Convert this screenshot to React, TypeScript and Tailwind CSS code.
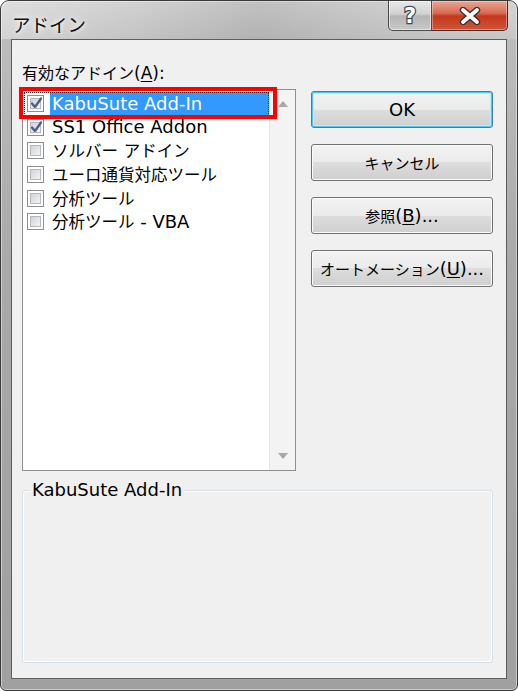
import React from "react";

const CJK = /([\u3000-\u30ff\u3400-\u9fff\uff00-\uffef]+)/;

function Mixed({ text, cjk }: { text: string; cjk: string }) {
  const parts = text.split(CJK);
  return (
    <>
      {parts.map((p, i) =>
        p === "" ? null : CJK.test(p) ? (
          <span key={i} className={cjk}>
            {p}
          </span>
        ) : (
          <span key={i}>{p}</span>
        )
      )}
    </>
  );
}

function Check({ checked }: { checked: boolean }) {
  return (
    <div className="w-[17px] h-[17px] shrink-0 border border-[#8e8f8f] bg-white p-[2px] flex">
      <div className="flex-1 border border-[#b4b8bd] bg-[linear-gradient(135deg,#cfd3d8,#f4f4f4)] relative">
        {checked && (
          <svg className="absolute -left-[2px] -top-[3px]" width="15" height="15" viewBox="0 0 15 15">
            <path d="M3 7.5 L6 11 L12 2.5" fill="none" stroke="#4a5c8c" strokeWidth="2.3" strokeLinecap="round" strokeLinejoin="round" />
          </svg>
        )}
      </div>
    </div>
  );
}

const items = [
  { label: "KabuSute Add-In", checked: true, selected: true },
  { label: "SS1 Office Addon", checked: true },
  { label: "ソルバー アドイン", checked: false },
  { label: "ユーロ通貨対応ツール", checked: false },
  { label: "分析ツール", checked: false },
  { label: "分析ツール - VBA", checked: false },
];

function Btn({ children, def }: { children: React.ReactNode; def?: boolean }) {
  return (
    <div
      className={
        def
          ? "h-[37px] rounded-[3px] border border-[#3c7fb1] shadow-[inset_0_0_0_1px_#4fc7f5,inset_0_0_0_2px_#bfeafa] bg-[linear-gradient(180deg,#f2f2f2_0%,#ebebeb_50%,#dddddd_50%,#cfcfcf_100%)] flex items-center justify-center text-[18px] leading-[22px] text-black"
          : "h-[37px] rounded-[3px] border border-[#707070] shadow-[inset_0_0_0_1px_#fbfbfb] bg-[linear-gradient(180deg,#f2f2f2_0%,#ebebeb_50%,#dddddd_50%,#cfcfcf_100%)] flex items-center justify-center text-[18px] leading-[22px] text-black"
      }
    >
      {children}
    </div>
  );
}

const btnCjk = "font-['Noto_Sans_CJK_JP',sans-serif] text-[15px]";

export default function App() {
  return (
    <div className="w-[518px] h-[691px] relative overflow-hidden rounded-t-[9px] rounded-b-[6px] border border-[#3a3a3a] bg-[linear-gradient(180deg,#cdcdcd_0px,#bcbcbc_40px,#a9a9a9_260px,#a0a0a0_100%)] shadow-[inset_0_0_0_1px_rgba(255,255,255,0.45)] flex flex-col font-['DejaVu_Sans','Noto_Sans_CJK_JP',sans-serif]">
      {/* title bar */}
      <div className="h-[38px] shrink-0 flex items-start bg-[linear-gradient(90deg,rgba(255,255,255,0.35)_0%,rgba(255,255,255,0.1)_25%,rgba(0,0,0,0.06)_50%,rgba(255,255,255,0.08)_80%,rgba(255,255,255,0.15)_100%)]">
        <div className="pl-[11px] pt-[10px] leading-[26px] text-[18.5px] text-[#111] font-['Noto_Sans_CJK_JP',sans-serif] [text-shadow:0_0_8px_#ffffff,0_0_4px_#ffffff]">
          アドイン
        </div>
        <div className="ml-auto mr-[9px] flex h-[30px]">
          <div className="w-[44px] h-[30px] border border-t-0 border-[#4a4a4a] rounded-bl-[5px] shadow-[inset_0_0_0_1px_rgba(255,255,255,0.55)] bg-[linear-gradient(180deg,#e8e8e8_0%,#d2d2d2_45%,#b5b5b5_52%,#c8c8c8_100%)] flex items-center justify-center">
            <svg width="22" height="26" viewBox="0 0 22 26">
              <text x="11" y="20" textAnchor="middle" fontFamily="DejaVu Sans, sans-serif" fontWeight="bold" fontSize="21" fill="#ffffff" stroke="#3d4557" strokeWidth="2.4" paintOrder="stroke">?</text>
            </svg>
          </div>
          <div className="w-[76px] h-[30px] border border-l-0 border-t-0 border-[#4a2a22] rounded-br-[5px] shadow-[inset_0_0_0_1px_rgba(255,255,255,0.35)] bg-[linear-gradient(180deg,#e9a898_0%,#d96a50_42%,#c4381c_52%,#d0553a_100%)] flex items-center justify-center">
            <svg width="24" height="18" viewBox="0 0 24 18">
              <path d="M5 3 L19 15 M19 3 L5 15" stroke="#3d3030" strokeWidth="6.5" strokeLinecap="round" />
              <path d="M5 3 L19 15 M19 3 L5 15" stroke="#ffffff" strokeWidth="3.8" strokeLinecap="round" />
            </svg>
          </div>
        </div>
      </div>

      {/* client */}
      <div className="mx-[10px] mb-[11px] flex-1 border border-[#5d5d5d] bg-[#f0f0f0] flex flex-col">
        <div className="flex">
          <div className="ml-[10px] w-[274px] flex flex-col">
            <div className="pt-[22px] leading-[20px] text-[17px] text-black">
              <Mixed text="有効なアドイン(" cjk="font-['Noto_Sans_CJK_JP',sans-serif] text-[16px]" />
              <span className="underline underline-offset-2">A</span>
              <span>):</span>
            </div>
            <div className="mt-[6px] h-[382px] border border-[#8e8f8f] bg-white flex">
              <div className="flex-1 pt-[2px] flex flex-col">
                {items.map((it, i) => (
                  <div key={i} className="relative h-[23.6px] flex items-center pl-[4px] text-[18px] leading-[22px] text-black">
                    <Check checked={it.checked} />
                    {it.selected ? (
                      <div className="ml-[6px] self-stretch flex-1 bg-[#3399ff] text-white flex items-center pl-[2px] whitespace-nowrap">
                        <Mixed text={it.label} cjk="font-['Noto_Sans_CJK_JP',sans-serif] text-[16.5px]" />
                      </div>
                    ) : (
                      <div className="ml-[8px] whitespace-nowrap">
                        <Mixed text={it.label} cjk="font-['Noto_Sans_CJK_JP',sans-serif] text-[16.5px]" />
                      </div>
                    )}
                    {it.selected && (
                      <div className="absolute left-[1px] right-0 top-0 bottom-0 border border-dotted border-[#222]" />
                    )}
                  </div>
                ))}
              </div>
              <div className="w-[26px] border-l border-[#e6e6e6] bg-[#f3f3f3] flex flex-col justify-between items-center py-[11px]">
                <svg width="10" height="6" viewBox="0 0 10 6">
                  <path d="M0 6 L5 0 L10 6 Z" fill="#a8a8a8" />
                </svg>
                <svg width="10" height="6" viewBox="0 0 10 6">
                  <path d="M0 0 L5 6 L10 0 Z" fill="#a8a8a8" />
                </svg>
              </div>
            </div>
          </div>
          <div className="ml-[15px] w-[182px] pt-[51px] flex flex-col gap-[16px]">
            <Btn def>OK</Btn>
            <Btn>
              <Mixed text="キャンセル" cjk={btnCjk} />
            </Btn>
            <Btn>
              <Mixed text="参照(" cjk={btnCjk} />
              <span className="underline underline-offset-2">B</span>
              <span>)...</span>
            </Btn>
            <Btn>
              <Mixed text="オートメーション(" cjk={btnCjk} />
              <span className="underline underline-offset-2">U</span>
              <span>)...</span>
            </Btn>
          </div>
        </div>

        {/* group box */}
        <div className="relative ml-[10px] mt-[19px] w-[471px] h-[173px] rounded-[3px] border border-[#d5dfe5] shadow-[inset_0_0_0_1px_#ffffff]">
          <div className="absolute left-[7px] -top-[12px] px-[2px] bg-[#f0f0f0] text-[18px] leading-[22px] text-black">
            KabuSute Add-In
          </div>
        </div>
      </div>

      {/* red annotation */}
      <div className="absolute left-[18px] top-[86px] w-[258px] h-[32px] border-[4px] border-[#ff0000]" />
    </div>
  );
}
